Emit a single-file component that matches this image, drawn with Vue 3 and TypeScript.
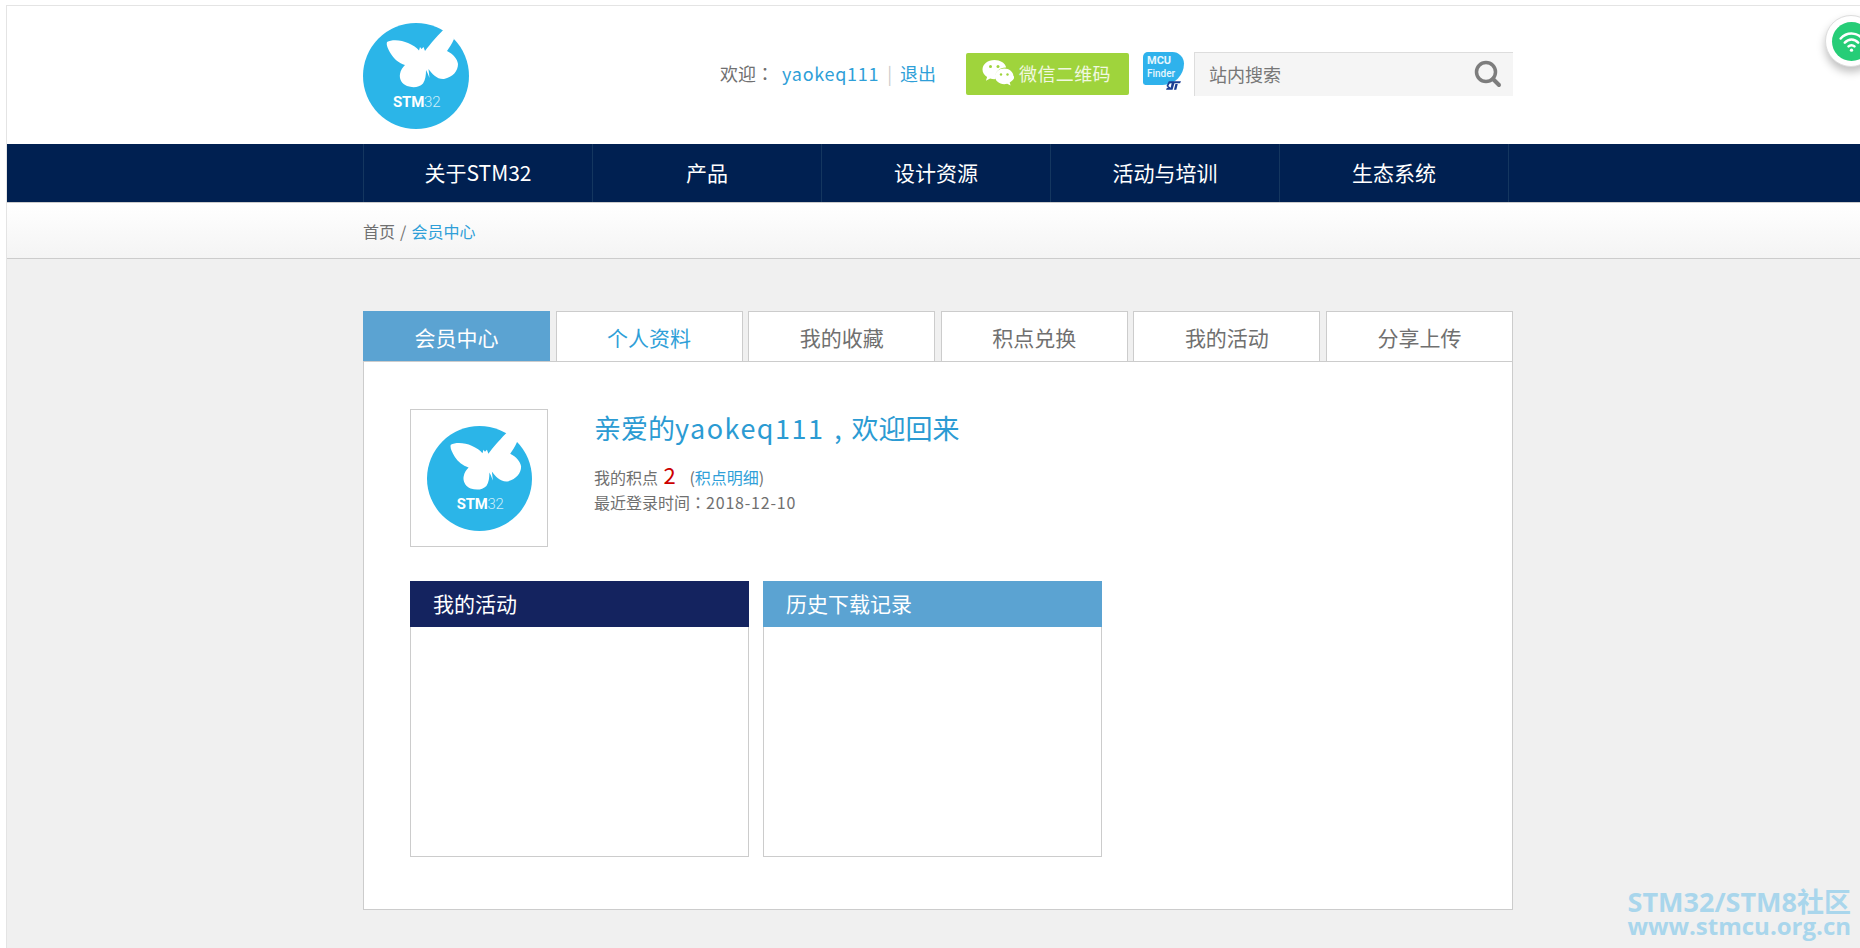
<script setup lang="ts">
const navItems = ['关于STM32', '产品', '设计资源', '活动与培训', '生态系统']

const tabs = [
  { label: '会员中心', state: 'active' },
  { label: '个人资料', state: 'link' },
  { label: '我的收藏', state: '' },
  { label: '积点兑换', state: '' },
  { label: '我的活动', state: '' },
  { label: '分享上传', state: '' },
]

// butterfly, traced from the logo
const wing =
  'M-29 -34 C-24 -37 -14 -36 -8 -33 C-3 -31 1 -28 3 -25.500 L4 -29 L5.500 -27 L7.500 -29 L9 -25 C14 -32 22 -41 33 -52 L38 -37 C36 -32 33 -28 31 -25 C37 -22 41.500 -17 42 -12 C42 -5 37 1 28 3 C21 3.500 16 -2 12.500 -7 L13.500 2 L11.500 -3 L10 -6 C10 -1 9.500 4 7 7.500 C3 11.500 -3 12 -9 10 C-14 8 -17 3 -16 -2 C-15.500 -6 -13 -9 -11 -11 C-17 -13 -22 -17 -25 -22 C-28 -27 -30 -31 -29 -34 Z'
</script>

<template>
  <div class="page">
    <div class="content">
      <header class="top">
        <div class="wrap top-row">
          <svg class="logo" viewBox="-53 -53 106 106">
            <circle r="53" fill="#2bb5e8" />
            <path :d="wing" fill="#fff" />
            <text class="logo-text" x="-23" y="31">STM<tspan class="thin">32</tspan></text>
          </svg>
          <div class="top-right">
            <div class="welcome">
              欢迎<span class="punct">：</span><a class="link name">yaokeq111</a><span class="pipe">|</span><a class="link">退出</a>
            </div>
            <div class="wechat">
              <svg class="wechat-icon" viewBox="0 0 32 28">
                <path
                  d="M12.500 1C5.800 1 .5 5.200.5 10.600c0 3.200 1.800 5.700 4.600 7.500l-1.200 3.600 4.200-2.100c1.400.3 2.800.6 4.400.6.4 0 .8 0 1.200-.1-.3-.9-.4-1.800-.4-2.700 0-5 4.600-9 10.200-9h.7C23 3.900 18.200 1 12.500 1z"
                  fill="#fff"
                />
                <circle cx="8.500" cy="7.500" r="1.500" fill="#9fd43c" />
                <circle cx="16" cy="7.500" r="1.500" fill="#9fd43c" />
                <path
                  d="M31.500 17.300c0-4.400-4.300-7.900-9.300-7.900s-9.300 3.500-9.300 7.900 4.300 7.900 9.300 7.900c1 0 2.100-.2 3-.5l3.400 1.800-.9-3c2.800-1.600 4.800-3.900 4.800-6.200z"
                  fill="#fff"
                />
                <circle cx="19" cy="15.500" r="1.200" fill="#9fd43c" />
                <circle cx="25.500" cy="15.500" r="1.200" fill="#9fd43c" />
              </svg>
              <span>微信二维码</span>
            </div>
            <div class="finder">
              <div class="finder-bubble">
                <span>MCU</span>
                <span class="finder-sub">Finder</span>
              </div>
              <svg class="st-mark" viewBox="0 0 16 9">
                <path d="M3 0h13l-1 2H9L7 9H4.500l1.500-7H4L2.500 5 5 7 4.500 9H0l1-2h1.500L.5 5z" fill="#1c3f94" />
                <path d="M10 3h2.500L11 9H8.500z" fill="#1c3f94" />
              </svg>
            </div>
            <div class="search">
              <span>站内搜索</span>
              <svg class="search-icon" viewBox="0 0 28 28">
                <circle cx="12" cy="12" r="9.500" fill="none" stroke="#7d7d7d" stroke-width="3.500" />
                <path d="M19 19l6 6" stroke="#7d7d7d" stroke-width="4" stroke-linecap="round" />
              </svg>
            </div>
          </div>
        </div>
      </header>

      <nav class="nav">
        <div class="wrap nav-row">
          <a v-for="item in navItems" :key="item" class="nav-item">{{ item }}</a>
        </div>
      </nav>

      <div class="crumbs">
        <div class="wrap">首页 / <a class="link">会员中心</a></div>
      </div>

      <main class="wrap main">
        <div class="tabs">
          <a v-for="tab in tabs" :key="tab.label" class="tab" :class="tab.state">{{ tab.label }}</a>
        </div>
        <section class="panel">
          <div class="profile">
            <div class="avatar">
              <svg class="avatar-logo" viewBox="-53 -53 106 106">
                <circle r="53" fill="#2bb5e8" />
                <path :d="wing" fill="#fff" />
                <text class="logo-text" x="-23" y="31">STM<tspan class="thin">32</tspan></text>
              </svg>
            </div>
            <div class="info">
              <h1>亲爱的<span class="wide">yaokeq111</span><span class="comma">,</span>欢迎回来</h1>
              <p>我的积点 <b class="points">2</b> <span class="detail">(<a class="link">积点明细</a>)</span></p>
              <p>最近登录时间<span class="punct">：</span><span class="date">2018-12-10</span></p>
            </div>
          </div>
          <div class="boxes">
            <div class="box">
              <div class="box-head navy">我的活动</div>
            </div>
            <div class="box">
              <div class="box-head blue">历史下载记录</div>
            </div>
          </div>
        </section>
      </main>
    </div>

    <div class="wifi">
      <div class="wifi-dot">
        <svg viewBox="0 0 30 26" class="wifi-icon">
          <path d="M2 10C9 2 21 2 28 10M7 15c4.500-5 11.500-5 16 0M11.500 19.500c2-2 5-2 7 0" fill="none" stroke="#fff" stroke-width="3" stroke-linecap="round" />
          <circle cx="15" cy="24" r="2" fill="#fff" />
        </svg>
      </div>
    </div>

    <div class="mark">
      <div class="mark-a">STM32/STM8社区</div>
      <div class="mark-b">www.stmcu.org.cn</div>
    </div>
  </div>
</template>

<style>
html,
body {
  margin: 0;
  background: #fff;
}
</style>

<style scoped>
.page {
  position: relative;
  width: 1860px;
  height: 948px;
  box-sizing: border-box;
  padding: 5px 0 0 6px;
  overflow: hidden;
  font-family: "Noto Sans CJK SC", "Open Sans", sans-serif;
  color: #707070;
}
.content {
  height: 100%;
  box-sizing: border-box;
  border-top: 1px solid #e4e4e4;
  border-left: 1px solid #e4e4e4;
  background: #f0f0f0;
}
.wrap {
  width: 1150px;
  margin-left: 356px;
}
.link {
  color: #2f9fd8;
}
.punct {
  font-family: "Noto Sans CJK TC", sans-serif;
}
.top {
  height: 138px;
  background: #fff;
}
.top-row {
  display: flex;
  height: 100%;
  padding-top: 17px;
  box-sizing: border-box;
}
.logo {
  width: 106px;
  height: 106px;
}
.logo-text {
  font: 700 15px "Roboto", sans-serif;
  letter-spacing: -0.2px;
  fill: #fff;
}
.thin {
  font-weight: 300;
  fill: #cdeefa;
}
.top-right {
  display: flex;
  align-items: flex-start;
  margin-left: auto;
  padding-top: 30px;
}
.welcome {
  display: flex;
  align-items: center;
  height: 42px;
  padding-bottom: 2px;
  box-sizing: border-box;
  font-size: 18px;
  white-space: pre;
}
.name {
  margin-left: 8px;
  letter-spacing: 0.7px;
}
.pipe {
  margin: 0 8px;
  color: #ccc;
}
.wechat {
  display: flex;
  align-items: center;
  gap: 5px;
  width: 163px;
  height: 42px;
  margin-left: 30px;
  padding: 0 0 2px 16px;
  box-sizing: border-box;
  border-radius: 2px;
  background: #9fd43c;
  color: #f1f8e0;
  font-size: 18px;
  letter-spacing: 0.4px;
}
.wechat-icon {
  width: 32px;
  height: 28px;
}
.finder {
  position: relative;
  width: 41px;
  height: 38px;
  margin: -1px 0 0 14px;
}
.finder-bubble {
  display: flex;
  flex-direction: column;
  width: 41px;
  height: 33px;
  padding: 2px 0 0 4px;
  box-sizing: border-box;
  border-radius: 6px 14px 26px 3px;
  background: #2fb2ec;
  color: #e6f6fd;
  font: 700 11px/13px "Roboto", sans-serif;
}
.finder-sub {
  font-size: 10px;
  font-weight: 500;
}
.st-mark {
  position: absolute;
  right: 3px;
  bottom: 0;
  width: 15px;
  height: 9px;
}
.search {
  display: flex;
  align-items: center;
  justify-content: space-between;
  width: 319px;
  height: 44px;
  margin: -1px 0 0 10px;
  padding: 0 11px 2px 14px;
  box-sizing: border-box;
  border-top: 1px solid #ddd;
  border-left: 1px solid #ddd;
  background: #f5f5f5;
  font-size: 18px;
  color: #777;
}
.search-icon {
  width: 28px;
  height: 28px;
}
.nav {
  height: 59px;
  box-sizing: border-box;
  border-bottom: 1px solid #ccc;
  background: #002051;
}
.nav-row {
  display: flex;
  height: 100%;
}
.nav-item {
  width: 229px;
  padding-bottom: 2px;
  display: flex;
  align-items: center;
  justify-content: center;
  border-left: 1px solid #14365f;
  box-sizing: border-box;
  color: #fff;
  font-size: 21px;
}
.nav-item:last-child {
  border-right: 1px solid #14365f;
  width: 230px;
}
.crumbs {
  height: 56px;
  box-sizing: border-box;
  border-bottom: 1px solid #ccc;
  padding-top: 16px;
  background: linear-gradient(#fff, #f4f4f4);
  font-size: 16px;
  line-height: 24px;
  word-spacing: 1.500px;
}
.main {
  padding-top: 52px;
}
.tabs {
  display: flex;
  justify-content: space-between;
  height: 51px;
}
.tab {
  width: 187px;
  height: 50px;
  display: flex;
  align-items: center;
  justify-content: center;
  box-sizing: border-box;
  border: 1px solid #ccc;
  border-bottom: 0;
  background: #fff;
  font-size: 21px;
}
.tab.active {
  border-color: #5ba3d2;
  background: #5ba3d2;
  color: #fff;
}
.tab.link {
  color: #2f9fd8;
}
.panel {
  height: 549px;
  margin-top: -1px;
  padding: 47px 46px 0;
  box-sizing: border-box;
  border: 1px solid #ccc;
  background: #fff;
}
.profile {
  display: flex;
}
.avatar {
  display: flex;
  align-items: center;
  justify-content: center;
  width: 138px;
  height: 138px;
  box-sizing: border-box;
  border: 1px solid #ccc;
}
.avatar-logo {
  width: 105px;
  height: 105px;
}
.info {
  margin-left: 46px;
  font-size: 16px;
  line-height: 25px;
}
.info h1 {
  margin: -1px 0 14px;
  color: #2b9bd3;
  font-size: 27px;
  font-weight: 400;
  line-height: 40px;
}
.wide {
  letter-spacing: 1.500px;
}
.comma {
  display: inline-block;
  width: 27px;
  text-align: center;
}
.info p {
  margin: 0;
}
.points {
  margin-left: 2px;
  color: #c00;
  font-size: 22px;
  font-weight: 400;
}
.detail {
  margin-left: 10px;
}
.date {
  letter-spacing: 0.800px;
}
.boxes {
  display: flex;
  gap: 14px;
  margin-top: 34px;
}
.box {
  width: 339px;
  height: 276px;
  box-sizing: border-box;
  border: 1px solid #ccc;
  border-top: 0;
}
.box-head {
  height: 46px;
  margin: 0 -1px;
  padding: 0 0 2px 23px;
  box-sizing: border-box;
  display: flex;
  align-items: center;
  color: #fff;
  font-size: 21px;
}
.navy {
  background: #14235f;
}
.blue {
  background: #5ba3d2;
}
.wifi {
  position: absolute;
  top: 15px;
  left: 1825px;
  display: flex;
  align-items: center;
  justify-content: center;
  width: 52px;
  height: 52px;
  box-sizing: border-box;
  border-radius: 50%;
  border: 1px solid #ddd;
  background: #fff;
  box-shadow: 0 5px 8px rgba(0, 0, 0, 0.25);
}
.wifi-dot {
  display: flex;
  align-items: center;
  justify-content: center;
  width: 39px;
  height: 39px;
  flex: none;
  border-radius: 50%;
  background: #26cd77;
}
.wifi-icon {
  width: 25px;
  height: 22px;
}
.mark {
  position: absolute;
  right: 9px;
  bottom: 10px;
  color: #a9d6ec;
  font-weight: 700;
  text-align: right;
  white-space: nowrap;
  font-family: "Open Sans", "Noto Sans CJK SC", sans-serif;
}
.mark-a {
  font-size: 27px;
  line-height: 25px;
}
.mark-b {
  font-size: 24px;
  line-height: 24px;
}
</style>
